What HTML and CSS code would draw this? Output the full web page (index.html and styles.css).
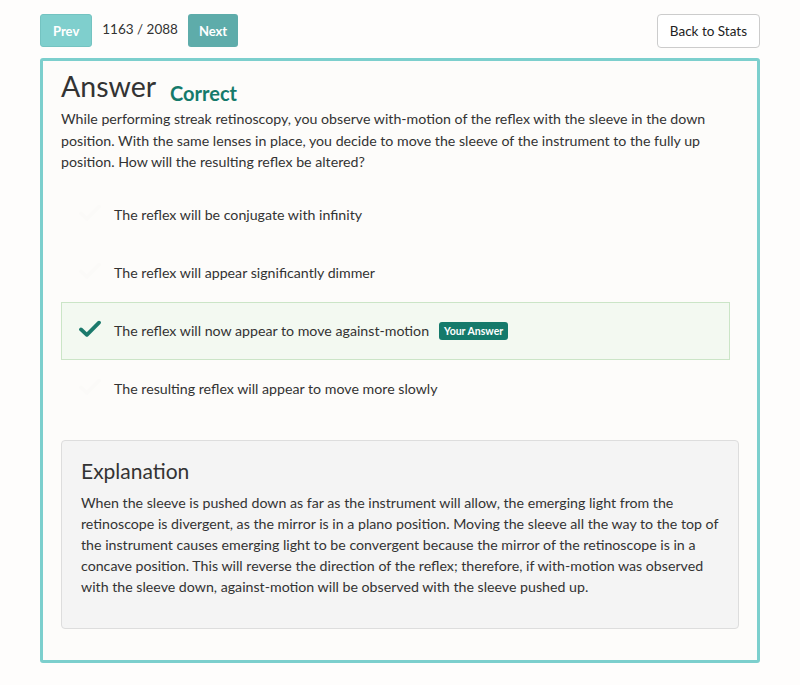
FILE: index.html
```html
<!DOCTYPE html>
<html>
<head>
<meta charset="utf-8">
<link rel="stylesheet" href="styles.css">
</head>
<body>
<div class="topbar">
  <div class="nav">
    <button class="btn btn-prev">Prev</button>
    <span class="count">1163 / 2088</span>
    <button class="btn btn-next">Next</button>
  </div>
  <button class="btn-back">Back to Stats</button>
</div>
<div class="panel">
  <div class="heading">
    <h1 class="title">Answer</h1>
    <span class="status">Correct</span>
  </div>
  <p class="question">While performing streak retinoscopy, you observe with-motion of the reflex with the sleeve in the down position. With the same lenses in place, you decide to move the sleeve of the instrument to the fully up position. How will the resulting reflex be altered?</p>
  <ul class="options">
    <li class="option"><span class="check faint"><svg viewBox="0 0 24 20" width="22" height="18"><path d="M2 10.5 L8.5 16.5 L22 3" fill="none" stroke="currentColor" stroke-width="4.2" stroke-linecap="round" stroke-linejoin="round"/></svg></span><span class="opt-text">The reflex will be conjugate with infinity</span></li>
    <li class="option"><span class="check faint"><svg viewBox="0 0 24 20" width="22" height="18"><path d="M2 10.5 L8.5 16.5 L22 3" fill="none" stroke="currentColor" stroke-width="4.2" stroke-linecap="round" stroke-linejoin="round"/></svg></span><span class="opt-text">The reflex will appear significantly dimmer</span></li>
    <li class="option selected"><span class="check"><svg viewBox="0 0 24 20" width="22" height="18"><path d="M2 10.5 L8.5 16.5 L22 3" fill="none" stroke="currentColor" stroke-width="4.2" stroke-linecap="round" stroke-linejoin="round"/></svg></span><span class="opt-text">The reflex will now appear to move against-motion</span><span class="badge">Your Answer</span></li>
    <li class="option"><span class="check faint"><svg viewBox="0 0 24 20" width="22" height="18"><path d="M2 10.5 L8.5 16.5 L22 3" fill="none" stroke="currentColor" stroke-width="4.2" stroke-linecap="round" stroke-linejoin="round"/></svg></span><span class="opt-text">The resulting reflex will appear to move more slowly</span></li>
  </ul>
  <div class="explanation">
    <h2 class="exp-title">Explanation</h2>
    <p class="exp-text">When the sleeve is pushed down as far as the instrument will allow, the emerging light from the retinoscope is divergent, as the mirror is in a plano position. Moving the sleeve all the way to the top of the instrument causes emerging light to be convergent because the mirror of the retinoscope is in a concave position. This will reverse the direction of the reflex; therefore, if with-motion was observed with the sleeve down, against-motion will be observed with the sleeve pushed up.</p>
  </div>
</div>
</body>
</html>
```
FILE: styles.css
```css
html, body {
  margin: 0;
  padding: 0;
  background: #fefdfc;
}
body {
  font-family: "Lato", "Open Sans", sans-serif;
  color: #333;
  padding: 14px 40px 0 40px;
}
.topbar {
  display: flex;
  justify-content: space-between;
  align-items: flex-start;
  height: 34px;
}
.nav {
  display: flex;
  align-items: center;
  height: 33px;
}
.btn {
  font-family: inherit;
  font-weight: 700;
  font-size: 13px;
  color: #fff;
  border: none;
  border-radius: 3px;
  height: 33px;
  padding: 0 12px;
}
.btn-prev {
  background: #7fcfcd;
  border: 1px solid #74c3c1;
}
.btn-next {
  background: #5eacaa;
  padding: 0 11px;
}
.count {
  font-size: 13.5px;
  color: #333;
  margin: 0 10px 0 10px;
  position: relative;
  top: -2px;
}
.btn-back {
  font-family: inherit;
  font-size: 13.5px;
  color: #222;
  background: #fff;
  border: 1px solid #ccc;
  border-radius: 4px;
  height: 34px;
  padding: 0 12px;
}
.panel {
  margin-top: 10px;
  border: 3px solid #7ccfcd;
  border-radius: 3px;
  background: #fdfcfa;
  padding: 7px 18px 31px 18px;
}
.heading {
  display: flex;
  align-items: baseline;
  height: 40px;
}
.title {
  margin: 0;
  font-size: 28.5px;
  font-weight: 400;
  color: #333;
  line-height: 36px;
}
.status {
  color: #157a6b;
  font-weight: 700;
  font-size: 20px;
  margin-left: 14px;
  position: relative;
  top: 4px;
}
.question {
  margin: 0;
  font-size: 14.2px;
  line-height: 21.5px;
}
.options {
  list-style: none;
  margin: 13px 9px 0 0;
  padding: 0;
}
.option {
  display: flex;
  align-items: center;
  height: 58px;
  font-size: 14.2px;
  border: 1px solid transparent;
  box-sizing: border-box;
  padding-left: 17px;
}
.option.selected {
  background: #f3f9f1;
  border-color: #cbe5c7;
}
.check {
  color: #1b7a6c;
  width: 35px;
  display: flex;
  align-items: center;
  position: relative;
  top: -2px;
}
.check.faint {
  color: #fbfaf8;
}
.badge {
  background: #157a6b;
  color: #fff;
  font-size: 10.5px;
  font-weight: 700;
  border-radius: 3px;
  padding: 3px 5px;
  margin-left: 10px;
}
.explanation {
  margin-top: 22px;
  background: #f4f4f4;
  border: 1px solid #ddd;
  border-radius: 4px;
  padding: 17px 19px 31px 19px;
}
.exp-title {
  margin: 0 0 8px 0;
  font-weight: 400;
  font-size: 21px;
  color: #333;
  line-height: 26px;
}
.exp-text {
  margin: 0;
  font-size: 14.2px;
  line-height: 21px;
  color: #333;
}
```
